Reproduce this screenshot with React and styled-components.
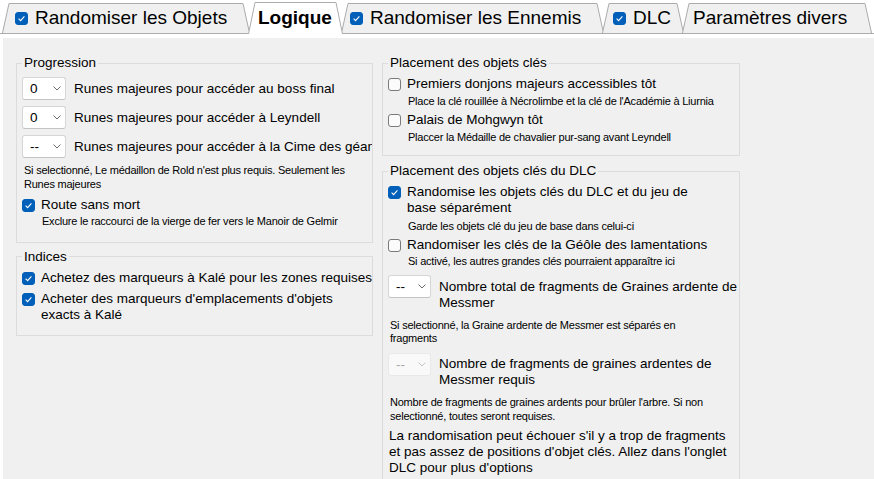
import React from 'react';
import styled, { createGlobalStyle } from 'styled-components';

const GlobalStyle = createGlobalStyle`
  html, body, #root {
    margin: 0;
    height: 100%;
  }
  body {
    background: #fff;
    color: #000;
    font-family: 'Liberation Sans', Arial, sans-serif;
    overflow: hidden;
  }
`;

const Window = styled.div`
  height: 100vh;
  display: flex;
  flex-direction: column;
  overflow: hidden;
  background: #fff;
`;

const TabBar = styled.div`
  flex: none;
  display: flex;
  align-items: flex-end;
  height: 34px;
  box-sizing: border-box;
  padding: 3px 0 0 2px;
  border-bottom: 1px solid #acacac;
`;

const TabItem = styled.div`
  position: relative;
  flex: none;
  display: flex;
  align-items: center;
  gap: 7px;
  box-sizing: border-box;
  width: ${p => p.$w}px;
  height: ${p => (p.$active ? 32 : 30)}px;
  margin-left: ${p => (p.$first ? 0 : -2)}px;
  margin-bottom: ${p => (p.$active ? -1 : 0)}px;
  padding-left: ${p => p.$pad}px;
  z-index: ${p => (p.$active ? 2 : 1)};
  font-size: 19px;
  font-weight: ${p => (p.$active ? 700 : 400)};
  white-space: nowrap;
`;

const ShapeSvg = styled.svg`
  position: absolute;
  left: 0;
  top: 0;
  z-index: -1;
`;

const Panel = styled.div`
  flex: 1;
  min-height: 0;
  margin: 4px 0 0 3px;
  padding: 17px 0 0 13px;
  background: #f0f0f0;
  display: flex;
  align-items: flex-start;
  gap: 9px;
  overflow: hidden;
`;

const Column = styled.div`
  flex: none;
  width: ${p => p.$w}px;
  display: flex;
  flex-direction: column;
  gap: ${p => p.$gap}px;
`;

const Group = styled.fieldset`
  margin: 0;
  min-width: 0;
  padding: 0 5px ${p => p.$pb}px;
  border: 1px solid #dcdcdc;
`;

const Legend = styled.legend`
  padding: 0 2px;
  font-size: 13.5px;
  line-height: 16px;
`;

const GroupBody = styled.div`
  display: flex;
  flex-direction: column;
  margin-right: -5px;
  overflow: hidden;
`;

const Row = styled.div`
  display: flex;
  align-items: flex-start;
  margin-top: ${p => p.$mt}px;
`;

const Label = styled.span`
  font-size: 13.5px;
  line-height: 16px;
  white-space: nowrap;
  padding-top: ${p => p.$pt || 0}px;
  margin-left: ${p => p.$ml || 0}px;
`;

const Note = styled.div`
  margin-top: ${p => p.$mt}px;
  padding-left: ${p => (p.$indent ? 20 : 2)}px;
  font-size: 11px;
  letter-spacing: -0.22px;
  line-height: 13.5px;
  white-space: nowrap;
`;

const Warning = styled.div`
  margin-top: ${p => p.$mt}px;
  padding-left: 1px;
  font-size: 13.5px;
  line-height: 16px;
  white-space: nowrap;
`;

const Box = styled.span`
  flex: none;
  display: flex;
  align-items: center;
  justify-content: center;
  width: 13px;
  height: 13px;
  box-sizing: border-box;
  margin-top: ${p => p.$mt || 0}px;
  border-radius: 3px;
  border: 1px solid ${p => (p.$on ? '#005fb8' : '#7a7a7a')};
  background: ${p => (p.$on ? '#005fb8' : '#fbfbfb')};
`;

const Select = styled.div`
  flex: none;
  display: flex;
  align-items: center;
  justify-content: space-between;
  width: ${p => p.$w}px;
  height: 23px;
  box-sizing: border-box;
  padding: 0 4px 0 7px;
  border: 1px solid ${p => (p.$disabled ? '#e9e9e9' : '#d6d6d6')};
  border-bottom-color: ${p => (p.$disabled ? '#e9e9e9' : '#c4c4c4')};
  border-radius: 3px;
  background: ${p => (p.$disabled ? '#f9f9f9' : '#fff')};
  color: ${p => (p.$disabled ? '#a8a8a8' : '#000')};
  font-size: 13.5px;
`;

function TabShape({ w, h, active }) {
  const s = 7;
  return (
    <ShapeSvg width={w} height={h}>
      <polygon points={`0,${h} ${s},0.5 ${w - s},0.5 ${w},${h}`} fill={active ? '#fff' : '#f0f0f0'} />
      <polyline
        points={`0.5,${h} ${s},0.5 ${w - s},0.5 ${w - 0.5},${h}`}
        fill="none"
        stroke="#acacac"
      />
    </ShapeSvg>
  );
}

function Check({ on, mt }) {
  return (
    <Box $on={on} $mt={mt}>
      {on && (
        <svg width="9" height="9" viewBox="0 0 9 9">
          <path d="M1.6 4.7 L3.6 6.6 L7.4 2.4" stroke="#fff" strokeWidth="1.1" fill="none" />
        </svg>
      )}
    </Box>
  );
}

function Combo({ value, w, disabled }) {
  return (
    <Select $w={w} $disabled={disabled}>
      <span>{value}</span>
      <svg width="8" height="5" viewBox="0 0 8 5">
        <path d="M0.5 0.5 L4 4 L7.5 0.5" stroke={disabled ? '#c4c4c4' : '#6a6a6a'} strokeWidth="1" fill="none" />
      </svg>
    </Select>
  );
}

const tabs = [
  { label: 'Randomiser les Objets', w: 248, pad: 13, check: true },
  { label: 'Logique', w: 95, pad: 10, active: true },
  { label: 'Randomiser les Ennemis', w: 263, pad: 9, check: true },
  { label: 'DLC', w: 82, pad: 11, check: true },
  { label: 'Paramètres divers', w: 190, pad: 11 },
];

function CheckRow({ on, mt, children }) {
  return (
    <Row $mt={mt}>
      <Check on={on} mt={2} />
      <Label $ml={6}>{children}</Label>
    </Row>
  );
}

function ComboRow({ value, w, disabled, mt, children }) {
  return (
    <Row $mt={mt}>
      <Combo value={value} w={w} disabled={disabled} />
      <Label $ml={8} $pt={3.5}>{children}</Label>
    </Row>
  );
}

export default function App() {
  return (
    <Window>
      <GlobalStyle />
      <TabBar>
        {tabs.map((t, i) => (
          <TabItem key={t.label} $w={t.w} $pad={t.pad} $active={t.active} $first={i === 0}>
            <TabShape w={t.w} h={t.active ? 32 : 30} active={t.active} />
            {t.check && <Check on />}
            <span>{t.label}</span>
          </TabItem>
        ))}
      </TabBar>

      <Panel>
        <Column $w={357} $gap={6}>
          <Group $pb={13}>
            <Legend>Progression</Legend>
            <GroupBody>
              <ComboRow value="0" w={44} mt={6}>Runes majeures pour accéder au boss final</ComboRow>
              <ComboRow value="0" w={44} mt={6}>Runes majeures pour accéder à Leyndell</ComboRow>
              <ComboRow value="--" w={44} mt={6}>Runes majeures pour accéder à la Cime des géants</ComboRow>
              <Note $mt={6}>
                Si selectionné, Le médaillon de Rold n'est plus requis. Seulement les
                <br />
                Runes majeures
              </Note>
              <CheckRow on mt={6}>Route sans mort</CheckRow>
              <Note $mt={2} $indent>Exclure le raccourci de la vierge de fer vers le Manoir de Gelmir</Note>
            </GroupBody>
          </Group>

          <Group $pb={12}>
            <Legend>Indices</Legend>
            <GroupBody>
              <CheckRow on mt={5}>Achetez des marqueurs à Kalé pour les zones requises</CheckRow>
              <CheckRow on mt={5}>
                Acheter des marqueurs d'emplacements d'objets
                <br />
                exacts à Kalé
              </CheckRow>
            </GroupBody>
          </Group>
        </Column>

        <Column $w={358} $gap={7}>
          <Group $pb={11}>
            <Legend>Placement des objets clés</Legend>
            <GroupBody>
              <CheckRow mt={5}>Premiers donjons majeurs accessibles tôt</CheckRow>
              <Note $mt={3} $indent>Place la clé rouillée à Nécrolimbe et la clé de l'Académie à Liurnia</Note>
              <CheckRow mt={3}>Palais de Mohgwyn tôt</CheckRow>
              <Note $mt={3} $indent>Placcer la Médaille de chavalier pur-sang avant Leyndell</Note>
            </GroupBody>
          </Group>

          <Group $pb={12}>
            <Legend>Placement des objets clés du DLC</Legend>
            <GroupBody>
              <CheckRow on mt={5}>
                Randomise les objets clés du DLC et du jeu de
                <br />
                base séparément
              </CheckRow>
              <Note $mt={4} $indent>Garde les objets clé du jeu de base dans celui-ci</Note>
              <CheckRow mt={3}>Randomiser les clés de la Géôle des lamentations</CheckRow>
              <Note $mt={2} $indent>Si activé, les autres grandes clés pourraient apparaître ici</Note>
              <ComboRow value="--" w={43} mt={7}>
                Nombre total de fragments de Graines ardente de
                <br />
                Messmer
              </ComboRow>
              <Note $mt={8}>
                Si selectionné, la Graine ardente de Messmer est séparés en
                <br />
                fragments
              </Note>
              <ComboRow value="--" w={43} mt={7} disabled>
                Nombre de fragments de graines ardentes de
                <br />
                Messmer requis
              </ComboRow>
              <Note $mt={8}>
                Nombre de fragments de graines ardents pour brûler l'arbre. Si non
                <br />
                selectionné, toutes seront requises.
              </Note>
              <Warning $mt={5}>
                La randomisation peut échouer s'il y a trop de fragments
                <br />
                et pas assez de positions d'objet clés. Allez dans l'onglet
                <br />
                DLC pour plus d'options
              </Warning>
            </GroupBody>
          </Group>
        </Column>
      </Panel>
    </Window>
  );
}
